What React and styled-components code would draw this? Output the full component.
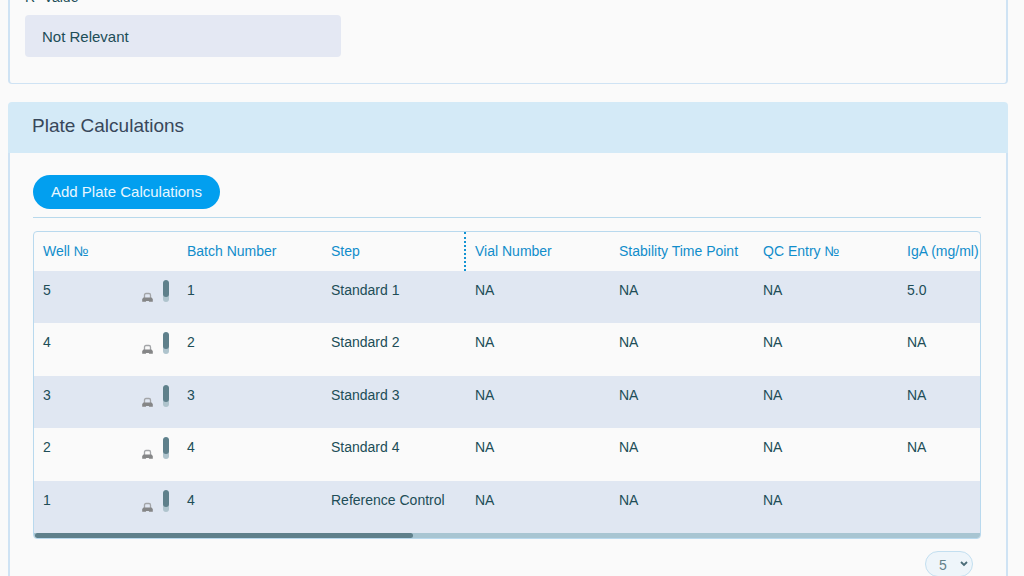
import React from "react";
import styled, { createGlobalStyle } from "styled-components";

const GlobalStyle = createGlobalStyle`
    * {
      box-sizing: border-box;
    }

    body {
      margin: 0;
      background-color: #fafafa;
      color: #204d57;
      font-family: "Liberation Sans", Arial, sans-serif;
      font-size: 14px;
    }
`;

const Page = styled.main`
    height: 100vh;
    overflow: hidden;
    padding: 0 16px 0 8px;
`;

const ResultPanel = styled.section`
    display: flow-root;
    margin-top: -32px;
    padding: 0 15px 26px;
    border: 2px solid #cfe3f4;
    border-top: none;
    border-bottom-width: 1px;
    border-radius: 0 0 4px 4px;
`;

const FieldLabel = styled.label`
    display: block;
    margin-top: 19px;
    line-height: 20px;
`;

const Field = styled.input`
    display: block;
    width: 316px;
    max-width: 100%;
    height: 42px;
    margin-top: 8px;
    padding: 0 17px;
    border: none;
    border-radius: 4px;
    background-color: #e4e8f3;
    color: #204d57;
    font: inherit;
    font-size: 15px;
`;

const PlatePanel = styled.section`
    margin-top: 18px;
`;

const PanelTitle = styled.h2`
    margin: 0;
    padding: 0 24px 3px;
    border-radius: 4px 4px 0 0;
    background-color: #d4eaf7;
    color: #38475a;
    font-size: 19px;
    font-weight: normal;
    line-height: 48px;
`;

const PanelBody = styled.div`
    padding: 22px 25px 32px 23px;
    border: 2px solid #cfe3f4;
    border-top: none;
`;

const Toolbar = styled.div`
    padding-bottom: 8px;
    border-bottom: 1px solid #b8d9ec;
`;

const AddButton = styled.button`
    display: block;
    height: 34px;
    padding: 0 18px 2px;
    border: none;
    border-radius: 17px;
    background-color: #029fef;
    color: #e8f7ff;
    font: inherit;
    font-size: 15px;
    white-space: nowrap;
    cursor: pointer;
`;

const TableFrame = styled.div`
    margin-top: 13px;
    overflow: hidden;
    border: 1px solid #b9d9ee;
    border-radius: 4px;
`;

const Table = styled.table`
    width: 1008px;
    table-layout: fixed;
    border-collapse: separate;
    border-spacing: 0;
`;

const HeadCell = styled.th`
    height: 39px;
    padding: 0 9px 2px;
    border-right: ${props => props.$frozenEdge ? '2px dotted #1493d2' : 'none'};
    color: #118dcb;
    font-weight: normal;
    text-align: left;
    white-space: nowrap;
`;

const Row = styled.tr`
    height: 52px;
    background-color: #e0e7f2;

    &:nth-child(even) {
      height: 53px;
      background-color: #fafafa;
    }
`;

const Cell = styled.td`
    padding: 9px 9px 0;
    line-height: 20px;
    vertical-align: top;
    white-space: nowrap;
`;

const WellCell = styled.div`
    display: flex;
    align-items: flex-end;
    gap: 10px;
`;

const WellNumber = styled.span`
    flex: 1;
    align-self: flex-start;
`;

const Level = styled.span`
    width: 6px;
    height: 22px;
    overflow: hidden;
    border-radius: 3px;
    background-color: #afc4cd;
`;

const LevelFill = styled.span`
    display: block;
    height: 17px;
    border-radius: 3px;
    background-color: #5f808b;
`;

const ScrollTrack = styled.div`
    height: 5px;
    padding: 0 1px;
    background-color: #a8c5d2;
`;

const ScrollThumb = styled.div`
    width: 40%;
    height: 5px;
    border-radius: 3px;
    background-color: #5f808b;
`;

const Pager = styled.div`
    display: flex;
    justify-content: flex-end;
    margin-top: 12px;
    padding-right: 8px;
`;

const SelectWrap = styled.div`
    display: grid;
    align-items: center;

    select, svg {
      grid-area: 1 / 1;
    }

    svg {
      justify-self: end;
      margin-right: 5px;
      pointer-events: none;
    }
`;

const PageSize = styled.select`
    width: 48px;
    height: 26px;
    padding: 2px 13px 0;
    appearance: none;
    border: 1px solid #c3dff0;
    border-radius: 13px;
    background-color: #eef5fa;
    color: #64818a;
    font: inherit;
`;

const LockIcon = () => (
    <svg width="11" height="10" viewBox="0 0 11 10" aria-hidden="true">
        <path d="M2.5 6V3Q2.5 1.5 4 1.5H7Q8.5 1.5 8.5 3V6" fill="none" stroke="#a3a5a8" strokeWidth="1.3"/>
        <path d="M1.5 5.5H9.5L10.8 7V9.8H7.2L6.8 9H4.2L3.8 9.8H0.2V7Z" fill="#858687"/>
    </svg>
);

const ChevronIcon = () => (
    <svg width="8" height="6" viewBox="0 0 8 6" aria-hidden="true">
        <path d="M1 1l3 3 3-3" fill="none" stroke="#4b6c78" strokeWidth="1.8"/>
    </svg>
);


const COLUMNS = ["Well №", "Batch Number", "Step", "Vial Number", "Stability Time Point", "QC Entry №", "IgA (mg/ml)"];

const ROWS = [
    ["5", "1", "Standard 1", "NA", "NA", "NA", "5.0"],
    ["4", "2", "Standard 2", "NA", "NA", "NA", "NA"],
    ["3", "3", "Standard 3", "NA", "NA", "NA", "NA"],
    ["2", "4", "Standard 4", "NA", "NA", "NA", "NA"],
    ["1", "4", "Reference Control", "NA", "NA", "NA", ""]
];

const PlateRow = ({ well, values }) => (
    <Row>
        <Cell>
            <WellCell>
                <WellNumber>{well}</WellNumber>
                <LockIcon/>
                <Level><LevelFill/></Level>
            </WellCell>
        </Cell>
        {values.map((value, i) => <Cell key={i}>{value}</Cell>)}
    </Row>
);

const App = () => (
    <Page>
        <GlobalStyle/>
        <ResultPanel>
            <FieldLabel htmlFor="r-value">R² Value</FieldLabel>
            <Field id="r-value" defaultValue="Not Relevant" readOnly/>
        </ResultPanel>
        <PlatePanel>
            <PanelTitle>Plate Calculations</PanelTitle>
            <PanelBody>
                <Toolbar>
                    <AddButton type="button">Add Plate Calculations</AddButton>
                </Toolbar>
                <TableFrame>
                    <Table>
                        <thead>
                            <tr>
                                {COLUMNS.map(name => (
                                    <HeadCell key={name} $frozenEdge={name === "Step"}>{name}</HeadCell>
                                ))}
                            </tr>
                        </thead>
                        <tbody>
                            {ROWS.map(([well, ...values]) => (
                                <PlateRow key={well} well={well} values={values}/>
                            ))}
                        </tbody>
                    </Table>
                    <ScrollTrack><ScrollThumb/></ScrollTrack>
                </TableFrame>
                <Pager>
                    <SelectWrap>
                        <PageSize aria-label="Rows per page" defaultValue="5">
                            <option>5</option>
                            <option>10</option>
                            <option>25</option>
                        </PageSize>
                        <ChevronIcon/>
                    </SelectWrap>
                </Pager>
            </PanelBody>
        </PlatePanel>
    </Page>
);


export default App;
